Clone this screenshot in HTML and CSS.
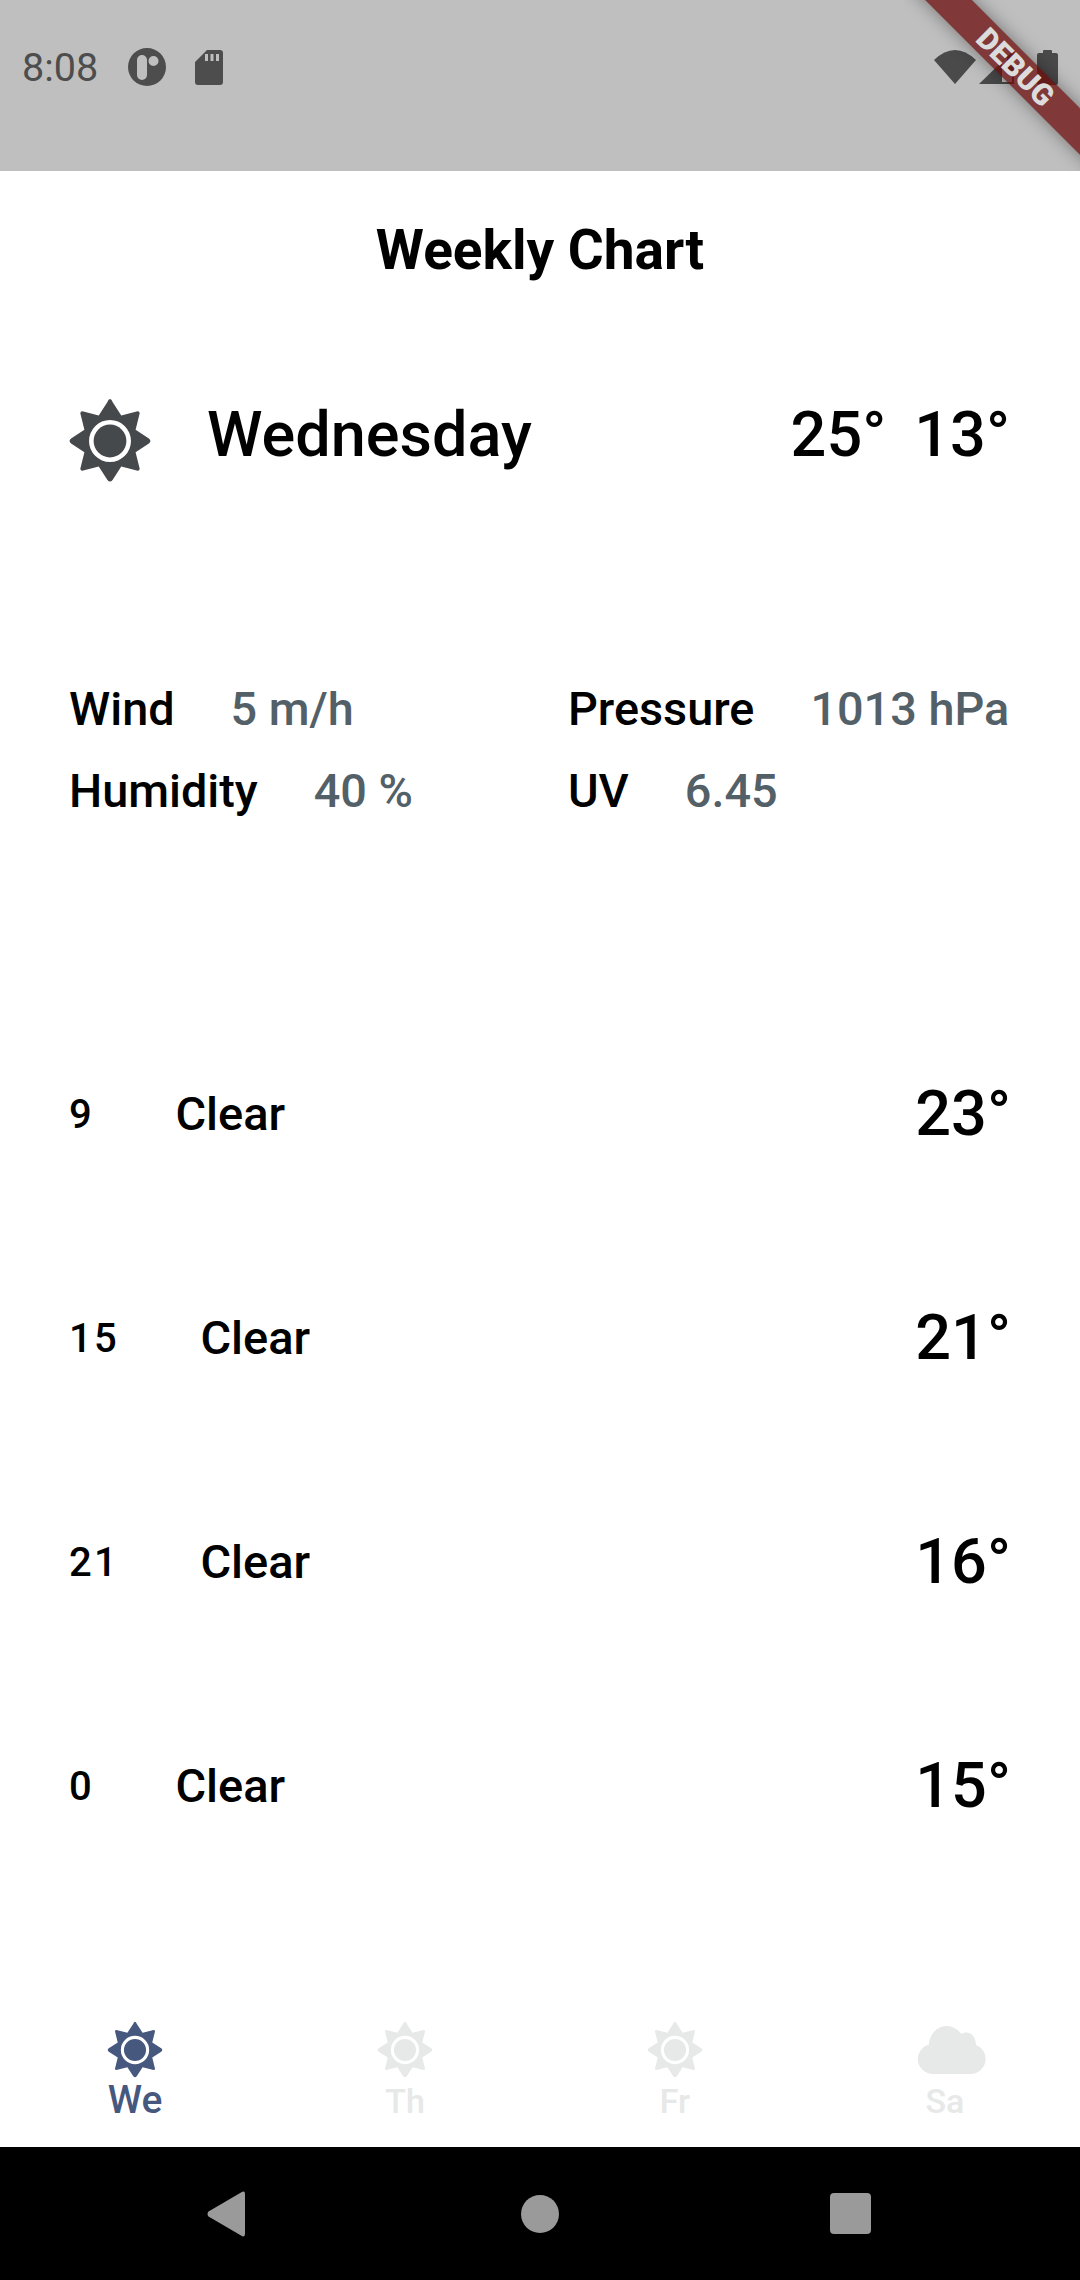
FILE: index.html
```html
<!DOCTYPE html>
<html lang="en">
<head>
  <meta charset="UTF-8" />
  <meta name="viewport" content="width=device-width, initial-scale=1.0" />
  <title>Weekly Chart</title>
  <link rel="stylesheet" href="styles.css">
</head>
<body>
  <svg class="defs" width="0" height="0" aria-hidden="true">
    <symbol id="sun" viewBox="0 0 84 84">
      <path fill-rule="evenodd" d="M42 1Q43.500 1 44.500 4L53 17L69 13Q71 13 71 15L67 31L80 39.500Q83 42 80 44.500L67 53L71 69Q71 71 69 71L53 67L44.500 80Q42 83 39.500 80L31 67L15 71Q13 71 13 69L17 53L4 44.500Q1 42 4 39.500L17 31L13 15Q13 13 15 13L31 17L39.500 4Q40.500 1 42 1Z M42 21.500A20.500 20.500 0 1 0 42 62.500A20.500 20.500 0 1 0 42 21.500Z"/>
      <circle cx="42" cy="42" r="16"/>
    </symbol>
  </svg>

  <div class="statusbar">
    <span class="clock">8:08</span>
    <svg class="st-icon" width="38" height="38" viewBox="0 0 38 38">
      <path fill-rule="evenodd" fill="#4d4d4d" d="M19 0a19 19 0 1 0 0 38a19 19 0 1 0 0-38Z M14 7a5 5 0 0 0-5 5v15a5 5 0 0 0 10 0v-15a5 5 0 0 0-5-5Z M25.500 8a5 5 0 1 0 0 10a5 5 0 1 0 0-10Z"/>
    </svg>
    <svg class="st-sd" width="28" height="35" viewBox="0 0 28 35">
      <path fill-rule="evenodd" fill="#4d4d4d" d="M12 0h13a3 3 0 0 1 3 3v29a3 3 0 0 1-3 3H3a3 3 0 0 1-3-3V12Z M10 4v7h3V4Z M15.500 4v7h3V4Z M21 4v7h3V4Z"/>
    </svg>
    <div class="st-right">
      <svg width="42" height="34" viewBox="0 0 42 34"><path fill="#4a4a4a" d="M0 10Q21 -10 42 10L21 34Z"/></svg>
      <svg width="35" height="34" viewBox="0 0 35 34"><path fill-rule="evenodd" fill="#4a4a4a" d="M0 34L35 0V34Z M23 32V12L28 7V22H33V32Z"/></svg>
      <svg class="st-batt" width="21" height="35" viewBox="0 0 21 35"><path fill="#4a4a4a" d="M6 3V1a1 1 0 0 1 1-1h7a1 1 0 0 1 1 1v2h4a2 2 0 0 1 2 2v28a2 2 0 0 1-2 2H2a2 2 0 0 1-2-2V5a2 2 0 0 1 2-2Z"/></svg>
    </div>
  </div>
  <div class="debug-corner"><div class="debug-banner">DEBUG</div></div>

  <h1 class="title">Weekly Chart</h1>

  <div class="today">
    <svg class="today-icon"><use href="#sun"/></svg>
    <span class="today-name">Wednesday</span>
    <span class="today-temps"><span>25°</span><span>13°</span></span>
  </div>

  <div class="details">
    <div class="detail"><span class="detail-label">Wind</span><span class="detail-value">5 m/h</span></div>
    <div class="detail"><span class="detail-label">Pressure</span><span class="detail-value">1013 hPa</span></div>
    <div class="detail"><span class="detail-label">Humidity</span><span class="detail-value">40 %</span></div>
    <div class="detail"><span class="detail-label">UV</span><span class="detail-value">6.45</span></div>
  </div>

  <div class="hours">
    <div class="hour"><span class="hour-num">9</span><span class="hour-desc">Clear</span><span class="hour-temp">23°</span></div>
    <div class="hour"><span class="hour-num">15</span><span class="hour-desc">Clear</span><span class="hour-temp">21°</span></div>
    <div class="hour"><span class="hour-num">21</span><span class="hour-desc">Clear</span><span class="hour-temp">16°</span></div>
    <div class="hour"><span class="hour-num">0</span><span class="hour-desc">Clear</span><span class="hour-temp">15°</span></div>
  </div>

  <div class="tabs">
    <div class="tab active"><svg class="tab-icon"><use href="#sun"/></svg><span>We</span></div>
    <div class="tab"><svg class="tab-icon"><use href="#sun"/></svg><span>Th</span></div>
    <div class="tab"><svg class="tab-icon"><use href="#sun"/></svg><span>Fr</span></div>
    <div class="tab">
      <svg class="tab-icon cloud" viewBox="0 0 68 48"><path d="M15 48a15 15 0 0 1-4-29.500C11 8 20 0 28 0c6 0 12 3 15.500 8C49 4 58 8 58 19A15 15 0 0 1 53 48Z"/></svg>
      <span>Sa</span>
    </div>
  </div>

  <div class="navbar">
    <svg width="38" height="46" viewBox="0 0 38 46"><path fill="#9a9a9a" d="M34 1.500Q38 -1 38 3V43Q38 47 34 44.500L1.500 25.500Q-0.500 23 1.500 20.500Z"/></svg>
    <div class="nav-home"></div>
    <div class="nav-recent"></div>
  </div>
</body>
</html>
```

FILE: styles.css
```css
* {
  box-sizing: border-box;
}
body {
  margin: 0;
  width: 1080px;
  height: 2280px;
  overflow: hidden;
  position: relative;
  display: flex;
  flex-direction: column;
  background: white;
  color: #000;
  font-family: Roboto, sans-serif;
}
.defs {
  position: absolute;
}

/* status bar */
.statusbar {
  height: 171px;
  background: #bfbfbf;
  display: flex;
  align-items: center;
  padding: 0 22px 37px 22px;
  color: #4d4d4d;
}
.clock {
  font-size: 39.5px;
  margin-right: 30px;
}
.st-sd {
  margin-left: 29px;
}
.st-right {
  margin-left: auto;
  display: flex;
  align-items: center;
  gap: 3px;
}
.st-batt {
  margin-left: 20px;
}
.debug-corner {
  position: absolute;
  top: 0;
  right: 0;
  width: 176px;
  height: 171px;
  overflow: hidden;
}
.debug-banner {
  position: absolute;
  top: 47px;
  left: -42px;
  width: 300px;
  height: 33px;
  padding-left: 10px;
  line-height: 33px;
  transform: rotate(45deg);
  background: rgba(107, 11, 11, 0.75);
  box-shadow: 0 0 18px rgba(0, 0, 0, 0.4);
  color: #dcdcdc;
  font-size: 30px;
  font-weight: 900;
  text-align: center;
}

.title {
  margin: 0;
  height: 157px;
  display: flex;
  align-items: center;
  justify-content: center;
  font-size: 55px;
  font-weight: 700;
}

/* today */
.today {
  height: 130px;
  margin-top: 41px;
  padding: 0 70px 0 67px;
  display: flex;
  align-items: center;
  font-size: 63px;
}
.today-icon {
  width: 86px;
  height: 86px;
  margin-top: 14px;
  fill: #46494c;
}
.today-name {
  margin-left: 54px;
  font-weight: 500;
}
.today-temps {
  margin-left: auto;
  display: flex;
  gap: 28px;
  font-weight: 500;
}

.details {
  margin-top: 186px;
  padding: 0 69px;
  display: grid;
  grid-template-columns: 499px 1fr;
  row-gap: 34px;
  font-size: 46.800px;
}
.detail {
  display: flex;
  gap: 56px;
  height: 48px;
  align-items: center;
  white-space: nowrap;
}
.detail-label {
  font-weight: 500;
}
.detail-value {
  color: #546067;
  font-weight: 500;
}

/* hourly list */
.hours {
  margin-top: 258px;
  padding: 0 69px;
  display: flex;
  flex-direction: column;
  gap: 144px;
}
.hour {
  height: 80px;
  display: flex;
  align-items: center;
}
.hour-num {
  font-size: 40px;
  letter-spacing: 2.200px;
  font-weight: 500;
  margin-right: 81.500px;
  padding-top: 2px;
}
.hour-desc {
  font-size: 47px;
  font-weight: 500;
}
.hour-temp {
  margin-left: auto;
  font-size: 63px;
  font-weight: 500;
}

/* bottom tabs */
.tabs {
  margin-top: auto;
  height: 147px;
  display: grid;
  grid-template-columns: repeat(4, 1fr);
  color: #e7e8e8;
  font-size: 34px;
  font-weight: 500;
}
.tab {
  display: flex;
  flex-direction: column;
  align-items: center;
}
.tab span {
  margin-top: 2px;
}
.tab-icon {
  width: 58px;
  height: 58px;
  margin-top: 21px;
  fill: #e7e8e8;
}
.tab.active {
  color: #47587f;
  font-size: 39px;
}
.tab.active span {
  margin-top: -2px;
}
.tab.active .tab-icon {
  fill: #47587f;
}
.cloud {
  width: 68px;
  height: 48px;
  margin-top: 26px;
  margin-bottom: 5px;
  margin-left: 14px;
}

/* android nav */
.navbar {
  height: 133px;
  background: #000;
  display: flex;
  align-items: center;
  justify-content: space-between;
  padding: 0 209px 0 207px;
}
.nav-home {
  width: 38px;
  height: 38px;
  margin-left: 5px;
  border-radius: 50%;
  background: #9a9a9a;
}
.nav-recent {
  width: 41px;
  height: 41px;
  border-radius: 4px;
  background: #9a9a9a;
}
```
